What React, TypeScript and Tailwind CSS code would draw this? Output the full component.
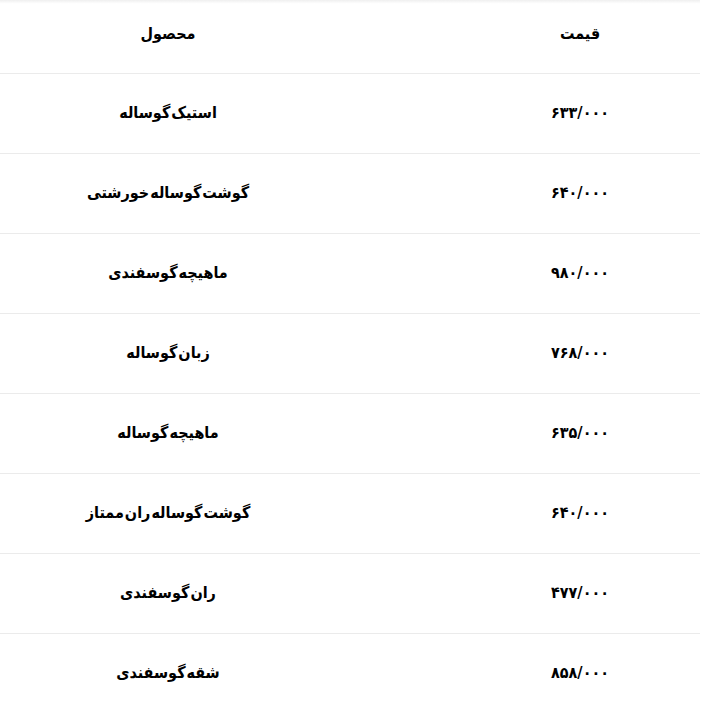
import React from 'react';

const rows = [
  { name: 'استیک گوساله', price: '۶۳۳/۰۰۰' },
  { name: 'گوشت گوساله خورشتی', price: '۶۴۰/۰۰۰' },
  { name: 'ماهیچه گوسفندی', price: '۹۸۰/۰۰۰' },
  { name: 'زبان گوساله', price: '۷۶۸/۰۰۰' },
  { name: 'ماهیچه گوساله', price: '۶۳۵/۰۰۰' },
  { name: 'گوشت گوساله ران ممتاز', price: '۶۴۰/۰۰۰' },
  { name: 'ران گوسفندی', price: '۴۷۷/۰۰۰' },
  { name: 'شقه گوسفندی', price: '۸۵۸/۰۰۰' }
];

const App = () => {
  return (
    <div
      dir="rtl"
      className="w-[720px] h-[703px] bg-white overflow-hidden text-black"
      style={{ fontFamily: '"DejaVu Sans Condensed", "DejaVu Sans", sans-serif' }}
    >
      <div className="w-[700px] mr-auto">
        <div className="h-[74px] pb-[5px] border-b border-[#ebebeb] bg-gradient-to-b from-[#efefef] via-white via-[5%] to-white grid grid-cols-[240px_124px_336px] items-center">
          <div className="text-center text-[16px] font-bold">قیمت</div>
          <div />
          <div className="text-center text-[16px] font-bold">محصول</div>
        </div>
        {rows.map((r, i) => (
          <div
            key={i}
            className="h-[80px] pb-[2px] border-b border-[#ebebeb] grid grid-cols-[240px_124px_336px] items-center"
          >
            <div className="text-center text-[16px] font-bold tracking-[-0.5px]">{r.price}</div>
            <div />
            <div className="text-center text-[16px] font-bold [word-spacing:-4px]">{r.name}</div>
          </div>
        ))}
      </div>
    </div>
  );
};

export default App;
